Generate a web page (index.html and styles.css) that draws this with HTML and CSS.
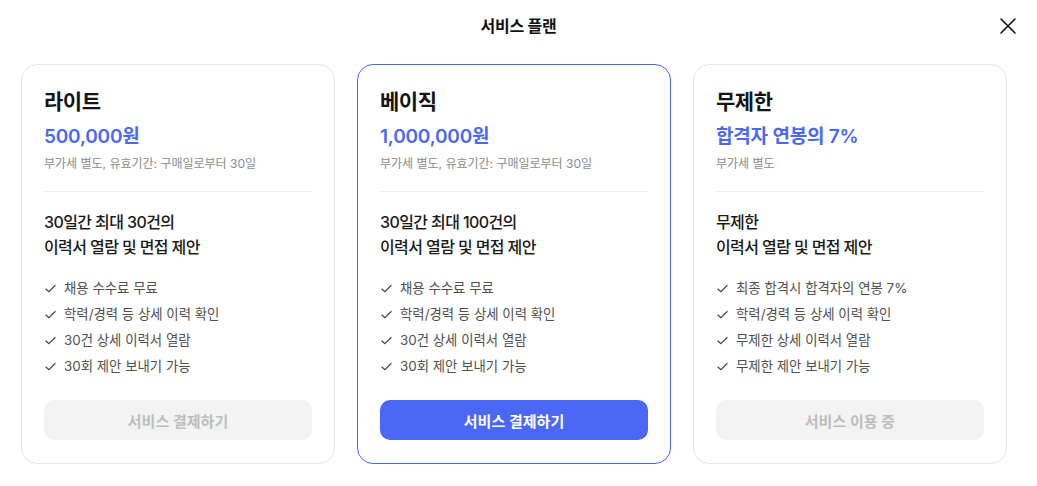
FILE: index.html
```html
<!DOCTYPE html>
<html lang="ko">
<head>
<meta charset="utf-8">
<title>서비스 플랜</title>
<link rel="stylesheet" href="styles.css">
</head>
<body>
<div class="modal">
  <header class="modal-head">
    <h1 class="modal-title">서비스 플랜</h1>
    <button class="close" aria-label="닫기">
      <svg width="18" height="18" viewBox="0 0 18 18"><path d="M2 2L16 16M16 2L2 16" stroke="#111" stroke-width="1.6" stroke-linecap="round" fill="none"/></svg>
    </button>
  </header>
  <div class="plans">
    <section class="card">
      <h2 class="plan-name">라이트</h2>
      <p class="price">500,000원</p>
      <p class="note">부가세 별도, 유효기간: 구매일로부터 30일</p>
      <hr class="divider">
      <p class="desc">30일간 최대 30건의<br>이력서 열람 및 면접 제안</p>
      <ul class="features">
        <li><svg class="check" viewBox="0 0 12 12"><path d="M1.5 6.2L4.5 9L10.5 3" /></svg>채용 수수료 무료</li>
        <li><svg class="check" viewBox="0 0 12 12"><path d="M1.5 6.2L4.5 9L10.5 3" /></svg>학력/경력 등 상세 이력 확인</li>
        <li><svg class="check" viewBox="0 0 12 12"><path d="M1.5 6.2L4.5 9L10.5 3" /></svg>30건 상세 이력서 열람</li>
        <li><svg class="check" viewBox="0 0 12 12"><path d="M1.5 6.2L4.5 9L10.5 3" /></svg>30회 제안 보내기 가능</li>
      </ul>
      <button class="btn btn-disabled">서비스 결제하기</button>
    </section>
    <section class="card card-active">
      <h2 class="plan-name">베이직</h2>
      <p class="price">1,000,000원</p>
      <p class="note">부가세 별도, 유효기간: 구매일로부터 30일</p>
      <hr class="divider">
      <p class="desc">30일간 최대 100건의<br>이력서 열람 및 면접 제안</p>
      <ul class="features">
        <li><svg class="check" viewBox="0 0 12 12"><path d="M1.5 6.2L4.5 9L10.5 3" /></svg>채용 수수료 무료</li>
        <li><svg class="check" viewBox="0 0 12 12"><path d="M1.5 6.2L4.5 9L10.5 3" /></svg>학력/경력 등 상세 이력 확인</li>
        <li><svg class="check" viewBox="0 0 12 12"><path d="M1.5 6.2L4.5 9L10.5 3" /></svg>30건 상세 이력서 열람</li>
        <li><svg class="check" viewBox="0 0 12 12"><path d="M1.5 6.2L4.5 9L10.5 3" /></svg>30회 제안 보내기 가능</li>
      </ul>
      <button class="btn btn-primary">서비스 결제하기</button>
    </section>
    <section class="card">
      <h2 class="plan-name">무제한</h2>
      <p class="price">합격자 연봉의 7%</p>
      <p class="note">부가세 별도</p>
      <hr class="divider">
      <p class="desc">무제한<br>이력서 열람 및 면접 제안</p>
      <ul class="features">
        <li><svg class="check" viewBox="0 0 12 12"><path d="M1.5 6.2L4.5 9L10.5 3" /></svg>최종 합격시 합격자의 연봉 7%</li>
        <li><svg class="check" viewBox="0 0 12 12"><path d="M1.5 6.2L4.5 9L10.5 3" /></svg>학력/경력 등 상세 이력 확인</li>
        <li><svg class="check" viewBox="0 0 12 12"><path d="M1.5 6.2L4.5 9L10.5 3" /></svg>무제한 상세 이력서 열람</li>
        <li><svg class="check" viewBox="0 0 12 12"><path d="M1.5 6.2L4.5 9L10.5 3" /></svg>무제한 제안 보내기 가능</li>
      </ul>
      <button class="btn btn-disabled">서비스 이용 중</button>
    </section>
  </div>
</div>
</body>
</html>
```
FILE: styles.css
```css
* { box-sizing: border-box; }
html, body { margin: 0; padding: 0; background: #fff; }
body {
  font-family: "Inter", "Noto Sans CJK KR", "Noto Sans", sans-serif;
  color: #111;
}
.modal {
  width: 1037px;
  height: 486px;
  padding: 0 20px;
}
.modal-head {
  position: relative;
  height: 64px;
  display: flex;
  align-items: flex-start;
  justify-content: center;
}
.modal-title {
  margin: 14px 0 0;
  font-size: 16px;
  font-weight: 700;
  line-height: 24px;
  letter-spacing: -0.2px;
}
.close {
  position: absolute;
  right: 0;
  top: 17px;
  width: 18px;
  height: 18px;
  padding: 0;
  border: 0;
  background: none;
  cursor: pointer;
  display: flex;
}
.plans {
  display: flex;
  gap: 22px;
  padding-left: 1px;
}
.card {
  width: 314px;
  height: 400px;
  border: 1.5px solid #e6e6e6;
  border-radius: 16px;
  padding: 22px 22px 0;
  display: flex;
  flex-direction: column;
}
.card-active { border-color: #4a67f5; }
.plan-name {
  margin: 0;
  font-size: 21px;
  font-weight: 600;
  line-height: 30px;
  color: #141414;
  letter-spacing: -0.5px;
}
.price {
  margin: 5px 0 0;
  font-size: 19px;
  font-weight: 600;
  line-height: 30px;
  color: #4a67f5;
  letter-spacing: -0.2px;
}
.note {
  margin: 3px 0 0;
  font-size: 12px;
  line-height: 18px;
  color: #8a8a8a;
}
.divider {
  margin: 18px 0 0;
  border: 0;
  border-top: 1px solid #eeeeee;
  height: 0;
}
.desc {
  margin: 18px 0 0;
  font-size: 16px;
  line-height: 25px;
  font-weight: 500;
  color: #1a1a1a;
  letter-spacing: -0.6px;
}
.features {
  list-style: none;
  margin: 18px 0 0;
  padding: 0;
  display: flex;
  flex-direction: column;
  gap: 6px;
}
.features li {
  display: flex;
  align-items: center;
  font-size: 13.4px;
  line-height: 20px;
  color: #505050;
}
.check {
  width: 13px;
  height: 13px;
  margin-right: 7px;
  fill: none;
  stroke: #444;
  stroke-width: 1.1;
}
.btn {
  margin-top: 24px;
  height: 40px;
  width: 100%;
  border: 0;
  border-radius: 10px;
  font-family: inherit;
  font-size: 15px;
  font-weight: 600;
  cursor: pointer;
}
.btn-disabled { background: #f3f3f3; color: #bdbdbd; }
.btn-primary { background: #4a67f5; color: #fff; }
```
